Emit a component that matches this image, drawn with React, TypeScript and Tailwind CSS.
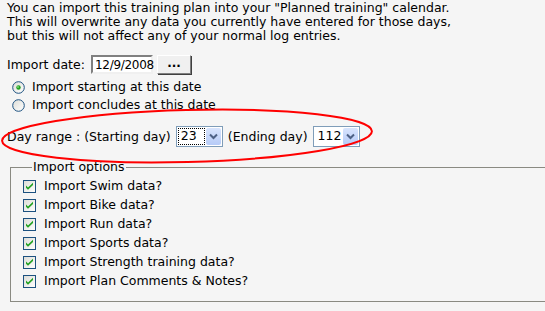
import React from "react";

function Radio({ checked }: { checked?: boolean }) {
  return (
    <svg width="13" height="13" viewBox="0 0 13 13" className="shrink-0">
      <defs>
        <linearGradient id="rg" x1="0" y1="0" x2="1" y2="1">
          <stop offset="0" stopColor="#dcdcd6" />
          <stop offset="1" stopColor="#ffffff" />
        </linearGradient>
      </defs>
      <circle cx="6.5" cy="6.5" r="5.8" fill="url(#rg)" stroke="#1c5180" strokeWidth="1" />
      {checked && (
        <>
          <circle cx="6.5" cy="6.5" r="2.2" fill="#21a121" />
          <circle cx="6" cy="6" r="0.9" fill="#7edc7e" />
        </>
      )}
    </svg>
  );
}

function Check() {
  return (
    <svg width="13" height="13" viewBox="0 0 13 13" className="shrink-0">
      <defs>
        <linearGradient id="cg" x1="0" y1="0" x2="1" y2="1">
          <stop offset="0" stopColor="#dcdcd6" />
          <stop offset="1" stopColor="#ffffff" />
        </linearGradient>
      </defs>
      <rect x="0.5" y="0.5" width="12" height="12" fill="url(#cg)" stroke="#1c5180" />
      <path d="M3 5.5 L5 7.5 L10 2.8 L10 5 L5 9.8 L3 7.8 Z" fill="#21a121" />
    </svg>
  );
}

function Select({ value, focus }: { value: string; focus?: boolean }) {
  return (
    <div className="flex h-[21px] w-[47px] items-stretch border border-[#7f9db9] bg-white p-px">
      <div
        className={
          focus
            ? "flex flex-1 items-center border border-dotted border-black pl-[2px] text-[12.5px] leading-none"
            : "flex flex-1 items-center border border-transparent pl-[2px] text-[12.5px] leading-none"
        }
      >
        {value}
      </div>
      <div className="ml-px flex w-[15px] items-center justify-center rounded-[2px] bg-gradient-to-b from-[#d8e4fd] to-[#b6cbf7]">
        <svg width="9" height="7" viewBox="0 0 9 7">
          <path d="M1 1.5 L4.5 5 L8 1.5" fill="none" stroke="#4d6185" strokeWidth="2" />
        </svg>
      </div>
    </div>
  );
}

const options = [
  "Import Swim data?",
  "Import Bike data?",
  "Import Run data?",
  "Import Sports data?",
  "Import Strength training data?",
  "Import Plan Comments & Notes?",
];

export default function App() {
  return (
    <div
      className="relative h-[311px] w-[545px] overflow-hidden bg-[#f5f5f5] text-[12.5px] leading-[14px] text-black"
      style={{ fontFamily: '"DejaVu Sans", Verdana, sans-serif' }}
    >
      <div className="pl-[7px] pt-[1px]">
        <p>You can import this training plan into your "Planned training" calendar.</p>
        <p>This will overwrite any data you currently have entered for those days,</p>
        <p>but this will not affect any of your normal log entries.</p>
      </div>

      <div className="mt-[12px] flex items-center pl-[7px]">
        <span className="w-[84px]">Import date:</span>
        <div className="flex h-[19px] w-[62px] items-center border-2 border-t-[#808080] border-l-[#808080] border-b-[#f0f0f0] border-r-[#f0f0f0] bg-white pl-[2px] text-[12px] tracking-[-0.3px]">
          12/9/2008
        </div>
        <div className="ml-[4px] flex h-[19px] w-[34px] items-center justify-center border border-t-white border-l-white border-b-[#808080] border-r-[#808080] bg-[#f0f0f0] pb-[4px] text-[12px] font-bold shadow-[1px_1px_0_#404040]">
          ...
        </div>
      </div>

      <div className="mt-[6px] flex flex-col gap-[4px] pl-[12px]">
        <label className="flex items-center gap-[7px]">
          <Radio checked />
          <span>Import starting at this date</span>
        </label>
        <label className="flex items-center gap-[7px]">
          <Radio />
          <span>Import concludes at this date</span>
        </label>
      </div>

      <div className="mt-[14px] flex items-center pl-[7px]">
        <span>Day range : (Starting day)</span>
        <span className="ml-[5px]"><Select value="23" focus /></span>
        <span className="ml-[5px]">(Ending day)</span>
        <span className="ml-[5px]"><Select value="112" /></span>
      </div>

      <fieldset className="ml-[10px] mr-[-20px] mt-[13px] h-[142px] border border-[#8a8a82] pl-[12px] pt-[5px]">
        <legend className="ml-[9px] px-[1px]">Import options</legend>
        <div className="flex flex-col gap-[5px]">
          {options.map((o) => (
            <label key={o} className="flex items-center gap-[8px]">
              <Check />
              <span>{o}</span>
            </label>
          ))}
        </div>
      </fieldset>

      <svg
        className="pointer-events-none absolute left-0 top-0"
        width="545"
        height="311"
        viewBox="0 0 545 311"
      >
        <ellipse
          cx="187"
          cy="136"
          rx="185"
          ry="26"
          transform="rotate(-1.5 187 136)"
          fill="none"
          stroke="#ff0000"
          strokeWidth="2"
        />
      </svg>
    </div>
  );
}
